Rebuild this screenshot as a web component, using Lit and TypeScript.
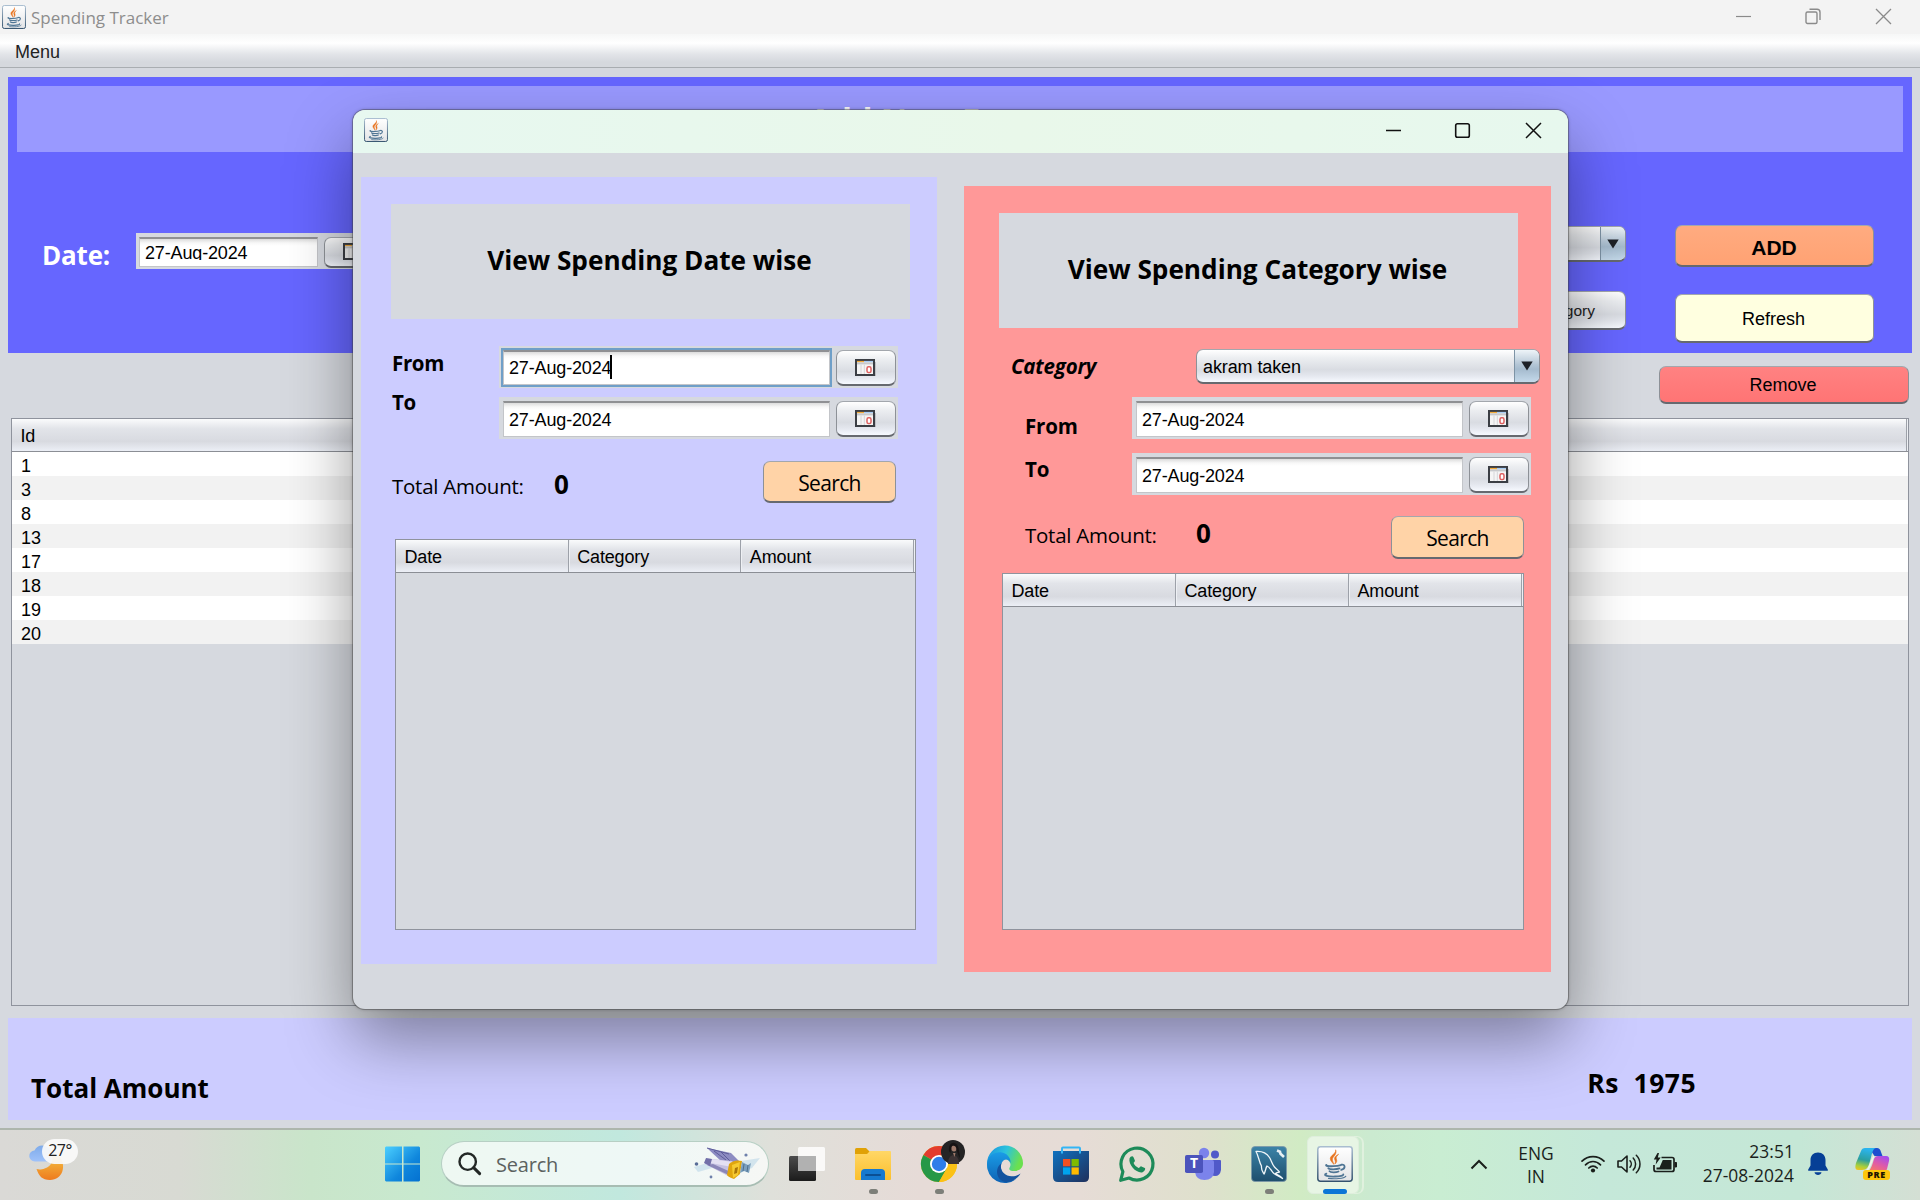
import { LitElement, html, css, svg } from "lit";
import { customElement, property } from "lit/decorators.js";

const javaIcon = (size: number) => html`<svg width=${size} height=${size} viewBox="0 0 36 36">
  <defs>
    <linearGradient id="jb" x1="0" y1="0" x2="0" y2="1"><stop offset="0" stop-color="#a9bdd0" /><stop offset="1" stop-color="#33526e" /></linearGradient>
    <linearGradient id="jf" x1="0" y1="0" x2="0" y2="1"><stop offset="0" stop-color="#ffffff" /><stop offset="1" stop-color="#e3e4e6" /></linearGradient>
  </defs>
  <rect x=".8" y=".8" width="34.4" height="34.4" rx="2.6" fill="url(#jf)" stroke="url(#jb)" stroke-width="1.5" />
  <path d="M18.6 3.8c1.4 3.4-5.6 5.6-5.3 9 .2 2.400 2.300 3.900 3.500 5.600-.5-2.500-1.600-3.500-1.400-5.300.3-2.600 5-4.600 3.200-9.300z" fill="#e8731f" stroke="#e8731f" stroke-width=".6" />
  <path d="M21.600 8.300c-3.200 1.500-4.500 3.200-3.900 5.100.5 1.500 1.200 2.600.1 4.600 2.300-1.900 2.200-3.300 1.500-5-.6-1.700.4-3 2.300-4.700z" fill="#e8731f" stroke="#e8731f" stroke-width=".6" />
  <g fill="none" stroke="#4f7594" stroke-linecap="round" stroke-width="1.800">
    <path d="M9.500 18.900c-1.800 1 2.500 1.500 6.800 1.300 3-.1 6-.6 7.500-1.100" />
    <path d="M24.500 18.700c3.700-.8 4.600 3.800-.3 5.200" />
    <path d="M11.300 22.200c1 1.500 8.500 1.300 11.200.2M12.500 25.300c1 1.400 6.800 1.300 9 .2" />
    <path d="M9.400 27.700c-4.500 1.700 2.600 3 8.600 2.800 5-.1 8.700-1 8.300-2.100" />
    <path d="M11.500 32.400c6.500.8 15.500.2 17.200-2.100" stroke-width="1.200" />
  </g>
</svg>`;

const calendarIcon = html`<svg width="21" height="18" viewBox="0 0 21 18">
  <path d="M3 16.200h18V3" fill="none" stroke="#b9babd" stroke-width="1.600" />
  <rect x="1" y="1" width="18" height="15" fill="#f5f5f5" stroke="#3b3e44" stroke-width="2" />
  <path d="M2 2.600h7" stroke="#f2ab3c" stroke-width="1.400" /><path d="M9 2.600h9" stroke="#a9cdf3" stroke-width="1.400" />
  <path d="M2 4.400h16" stroke="#c7c9cc" stroke-width="2" />
  <path d="M6 5.500v9.500M9.300 5.500v9.500" stroke="#d5d6d9" stroke-width="1" />
  <rect x="12" y="7.800" width="4" height="5.800" rx="1.600" fill="#fff" stroke="#dd5f5f" stroke-width="1.500" />
</svg>`;

const arrow = html`<svg width="12" height="10" viewBox="0 0 12 10"><path d="M.3.500h11.400L6 9.600z" fill="#1d2127" /></svg>`;

const nimbus = css`
  .btn {
    box-sizing: border-box;
    display: flex;
    align-items: center;
    justify-content: center;
    border: 1.500px solid #8d9197;
    border-top-color: #a3a7ad;
    border-bottom: 2px solid #66696f;
    border-radius: 7px;
    background: linear-gradient(#ffffff 0, #eceef1 25%, #d9dce2 62%, #e4e7ee 80%, #f6f9ff 100%);
    color: #000;
    font: 18px "Liberation Sans", Arial, sans-serif;
    white-space: nowrap;
  }
  svg { display: block; flex: none; }
`;

@customElement("date-picker")
export class DatePicker extends LitElement {
  @property() value = "27-Aug-2024";
  @property({ type: Boolean, reflect: true }) focused = false;
  @property({ type: Boolean, reflect: true }) compact = false;

  static styles = [nimbus, css`
    :host { box-sizing: border-box; display: flex; width: 399px; height: 42px; padding: 4px 2px 2px 4px; background: #d6d9df; }
    .field {
      box-sizing: border-box;
      width: 327px;
      height: 36px;
      padding-left: 5px;
      border: 1px solid #c3c5c9;
      border-top: 2px solid #8f9093;
      background: linear-gradient(#dcdcdc 0, #f8f8f8 4px, #fff 7px);
      font: 18px/34px "Liberation Sans", Arial, sans-serif;
      letter-spacing: -.150px;
      color: #000;
      white-space: nowrap;
      overflow: hidden;
    }
    :host([focused]) .field { outline: 2px solid #6f9fc8; outline-offset: 0; height: 35px; border-top-width: 2px; }
    .caret { display: inline-block; width: 2px; height: 24px; margin-left: -1px; vertical-align: -5px; background: #000; }
    :host([focused]) .field { line-height: 33px; }
    .btn { width: 60px; height: 36px; margin-left: 6px; padding-right: 2px; }
    :host([compact]) { width: 250px; height: 36px; padding-left: 3px; }
    :host([compact]) .field { width: 179px; height: 30px; line-height: 36px; }
    :host([compact]) .text { display: block; height: 22px; line-height: 30px; margin-top: -1px; overflow: hidden; }
    :host([compact]) .btn { height: 31px; }
  `];

  render() {
    return html`
      <div class="field"><span class="text">${this.value}${this.focused ? html`<span class="caret"></span>` : ""}</span></div>
      <div class="btn">${calendarIcon}</div>`;
  }
}

@customElement("result-table")
export class ResultTable extends LitElement {
  @property({ attribute: false }) columns: string[] = ["Date", "Category", "Amount"];
  @property({ attribute: false }) rows: string[] = [];

  static styles = css`
    :host { box-sizing: border-box; display: block; border: 1.500px solid #8f939d; background: #d6d9df; font: 18px "Liberation Sans", Arial, sans-serif; color: #000; }
    .head { box-sizing: border-box; display: flex; height: 33px; padding-right: 1px; border-bottom: 1.500px solid #8b8e95;
      background: linear-gradient(#fafbfc 0, #e2e4e9 30%, #d8dae0 70%, #eceff6 100%); }
    .col { flex: 1; box-sizing: border-box; padding-left: 8.500px; line-height: 35px; border-right: 1px solid #9da1a9; box-shadow: 1px 0 #eef0f4; letter-spacing: -.150px; }
    .row { height: 24px; padding-left: 9px; line-height: 28px; background: #fff; }
    .row:nth-child(odd) { background: #f2f2f2; }
  `;

  render() {
    return html`
      <div class="head">${this.columns.map((c) => html`<div class="col">${c}</div>`)}</div>
      ${this.rows.map((r) => html`<div class="row">${r}</div>`)}`;
  }
}

@customElement("spending-dialog")
export class SpendingDialog extends LitElement {
  static styles = [nimbus, css`
    :host {
      display: block;
      overflow: hidden;
      border-radius: 12px;
      background: #d6d9df;
      box-shadow: 0 0 0 1px rgba(70, 70, 70, .42), 0 0 3px 1px rgba(0, 0, 0, .18), 0 30px 66px rgba(0, 0, 0, .4);
      font-family: "Open Sans", "Noto Sans", sans-serif;
      color: #000;
    }
    .bar { display: flex; height: 43px; background: linear-gradient(90deg, #e7f8f0, #e9f8ea 55%, #e7f8ee); }
    .app { padding: 8px 0 0 11px; }
    .controls { display: flex; margin-left: auto; padding: 12px 26px 0 0; }
    .controls svg + svg { margin-left: 52px; }
    .controls svg:last-child { margin-left: 54px; }
    .panels { display: flex; align-items: flex-start; }
    .panel { box-sizing: border-box; padding-top: 27px; }
    .dates { width: 576px; height: 787px; margin: 24px 0 0 8px; background: #ccccff; }
    .cats { width: 587px; height: 786px; margin: 33px 0 0 27px; background: #ff9898; }
    .heading { width: 519px; height: 115px; margin-left: 30px; background: #d6d9df; text-align: center; font-size: 26.200px; font-weight: 700; line-height: 112px; }
    .heading span { position: relative; left: -1px; }
    .cats .heading { margin-left: 35px; }
    .form { display: flex; margin: 27px 0 0 31px; }
    .labels { width: 107px; font-size: 20.500px; font-weight: 700; letter-spacing: -.350px; }
    .from { line-height: 35px; }
    .to { line-height: 43px; }
    .pickers { display: flex; flex-direction: column; gap: 9px; }
    .row { display: flex; align-items: center; }
    .total { height: 42px; margin: 22px 41px 0 31px; }
    .cap { width: 162px; padding-top: 7px; font-size: 20.500px; letter-spacing: -.250px; white-space: nowrap; }
    .sum { padding-top: 4px; font-size: 26px; font-weight: 700; }
    .search { width: 133px; height: 42px; margin-left: auto; padding-top: 2px; background: #ffd3a7; font: 21px "Open Sans", "Noto Sans", sans-serif; letter-spacing: -.650px; }
    result-table { width: 521px; height: 391px; margin: 36px 0 0 34px; }
    .cat { height: 34px; margin: 21px 11px 0 47px; }
    .bold { font-size: 20.500px; font-weight: 700; letter-spacing: -.200px; white-space: nowrap; }
    .combo { display: flex; box-sizing: border-box; width: 344px; height: 35px; margin-left: auto; justify-content: flex-start; align-items: stretch; padding-left: 6px; line-height: 35px; letter-spacing: -.100px; overflow: hidden; }
    .drop { display: flex; align-items: center; justify-content: center; box-sizing: border-box; width: 25px; margin-left: auto; padding-right: 1px; border-left: 1.500px solid #7d93a5; background: linear-gradient(#eef4f8, #b4c6d6 45%, #a5bbce 60%, #c4d9ea); }
    .date { height: 42px; margin: 14px 20px 0 61px; }
    .date date-picker { margin-left: auto; }
    .low { padding-top: 16px; }
    .high { padding-bottom: 11px; }
    .total2 { height: 43px; margin: 21px 27px 0 61px; }
    .total2 .cap { width: 171px; padding: 0 0 5px; }
    .total2 .sum { padding: 0 0 9px; }
    .total2 .search { height: 43px; }
    .cats result-table { width: 522px; height: 357px; margin: 14px 0 0 38px; }
  `];

  render() {
    return html`
      <div class="bar">
        <div class="app">${javaIcon(24)}</div>
        <div class="controls">
          <svg width="17" height="17" viewBox="0 0 17 17"><path d="M1 8.500h15" stroke="#111" stroke-width="1.400" /></svg>
          <svg width="17" height="17" viewBox="0 0 17 17"><rect x="1.700" y="1.700" width="13.600" height="13.600" rx="1.800" fill="none" stroke="#111" stroke-width="1.600" /></svg>
          <svg width="17" height="17" viewBox="0 0 17 17"><path d="M1 1l15 15M16 1L1 16" stroke="#111" stroke-width="1.500" /></svg>
        </div>
      </div>
      <div class="panels">
        <section class="panel dates">
          <div class="heading"><span>View Spending Date wise</span></div>
          <div class="form">
            <div class="labels"><div class="from">From</div><div class="to">To</div></div>
            <div class="pickers"><date-picker focused></date-picker><date-picker></date-picker></div>
          </div>
          <div class="row total"><span class="cap">Total Amount:</span><span class="sum">0</span><div class="btn search">Search</div></div>
          <result-table></result-table>
        </section>
        <section class="panel cats">
          <div class="heading"><span>View Spending Category wise</span></div>
          <div class="row cat"><em class="bold">Category</em><div class="btn combo">akram taken<span class="drop">${arrow}</span></div></div>
          <div class="row date"><span class="bold low">From</span><date-picker></date-picker></div>
          <div class="row date"><span class="bold high">To</span><date-picker></date-picker></div>
          <div class="row total2"><span class="cap">Total Amount:</span><span class="sum">0</span><div class="btn search">Search</div></div>
          <result-table></result-table>
        </section>
      </div>`;
  }
}

const start = svg`<defs><linearGradient id="w" gradientUnits="userSpaceOnUse" x1="0" y1="0" x2="36" y2="36"><stop offset="0" stop-color="#4cd0ff"/><stop offset=".6" stop-color="#0f86dc"/><stop offset="1" stop-color="#0370d0"/></linearGradient></defs>
  <path fill="url(#w)" d="M1 .500h16v17H0V1.500zM18.500.500H34l1 1v16H18.500zM0 18.500h17v17H1l-1-1zM18.500 18.500H35v16l-1 1H18.500z"/>`;

const taskView = svg`<defs><linearGradient id="tv1" x1="0" y1="0" x2="0" y2="1"><stop offset="0" stop-color="#4c4c4c"/><stop offset="1" stop-color="#1b1b1b"/></linearGradient></defs>
  <rect x="0" y="10" width="27" height="25" rx="1.500" fill="url(#tv1)"/><rect x="9" y="1" width="27" height="24" rx="1.500" fill="#fff" opacity=".82"/><path d="M9 10h18v15H9z" fill="#a9a9a9" opacity=".85"/>`;

const explorer = svg`<defs><linearGradient id="fo" x1="0" y1="0" x2="0" y2="1"><stop offset="0" stop-color="#ffd766"/><stop offset="1" stop-color="#fbbf2d"/></linearGradient></defs>
  <path d="M0 3.500Q0 2 1.500 2H11l4 4-3 4H0z" fill="#e0a106"/><path d="M0 8h12l3-3h20q1 0 1 1v27q0 1-1 1H1q-1 0-1-1z" fill="url(#fo)"/>
  <path d="M6 34v-7q0-4 4-4h16q4 0 4 4v7z" fill="#1579cf"/><path d="M11 29h14" stroke="#0b4f93" stroke-width="2" stroke-linecap="round"/>`;

const chrome = svg`<circle cx="18" cy="18" r="18" fill="#fbc116"/><path d="M18 18L2.400 9A18 18 0 0 1 33.600 9z" fill="#e33b2e"/>
  <path d="M2.400 9A18 18 0 0 0 18 36l7.800-13.500L18 18z" fill="#269847"/><path d="M18 9.500h15.900A18 18 0 0 1 18 36l8-14z" fill="#fbc116"/>
  <circle cx="18" cy="18" r="9" fill="#fff"/><circle cx="18" cy="18" r="7.200" fill="#2f7de9"/>`;

const edge = svg`<defs>
    <linearGradient id="e1" x1="0" y1="0" x2="1" y2=".3"><stop offset="0" stop-color="#1a8fe0"/><stop offset=".55" stop-color="#2cc3dc"/><stop offset="1" stop-color="#6be04f"/></linearGradient>
    <linearGradient id="e2" x1="0" y1="0" x2="0" y2="1"><stop offset="0" stop-color="#1a9ce6"/><stop offset="1" stop-color="#0e62b4"/></linearGradient></defs>
  <path d="M0 18A18 18 0 0 1 36 17c.2 5.500-4 8-8.500 8-5 0-6-2-4.800-3.600 2-2.800.3-8.400-6.700-8.600C8 12.500 2 17 .400 23z" fill="url(#e1)"/>
  <path d="M0 18C1 9 8 5.500 15 6.500 22 8 24 14 23.500 17c-1-3.500-4.500-4.500-7-2.500-4 3.300-3.500 12 2.500 16.500 3 2.300 7 3.500 10 2.300A18 18 0 0 1 0 18z" fill="url(#e2)"/>
  <path d="M14.500 17c-2.500 7 3 13 10 13.200 4 .2 7-1.200 9-2.700C31 32.500 25 36 18.500 36 10 35 6.500 23 14.500 17z" fill="#12529f"/>`;

const store = svg`<defs><linearGradient id="st" x1="0" y1="0" x2="1" y2="1"><stop offset="0" stop-color="#0f71bf"/><stop offset="1" stop-color="#20305c"/></linearGradient></defs>
  <path d="M9 7V2.500Q9 1.500 10 1.500h16q1 0 1 1V7" fill="none" stroke="#34b5f5" stroke-width="2"/>
  <path d="M0 5h36v26q0 5-5 5H5q-5 0-5-5z" fill="url(#st)"/><path d="M9 5v2.500M27 5v2.500" stroke="#34b5f5" stroke-width="2"/>
  <path d="M10 13h7.300v7.300H10z" fill="#f25022"/><path d="M18.500 13h7.300v7.300h-7.300z" fill="#7fba00"/><path d="M10 21.400h7.300v7.200H10z" fill="#00a4ef"/><path d="M18.500 21.400h7.300v7.200h-7.300z" fill="#ffb900"/>`;

const whatsapp = svg`<path d="M1.700 34.300l2.200-8.600a16 16 0 1 1 6.200 6.300z" fill="none" stroke="#1d8b59" stroke-width="3.200" stroke-linejoin="round"/>
  <path d="M10.500 12.500c1-2.500 3.300-3 4-1.300l1.400 3.300c.3.900-1.300 2-1.300 2.600.6 1.900 3 4.200 5 4.900.8.200 1.900-2 2.800-1.600l3.400 1.700c1 .6-.2 3.400-2.200 4.100-5.500 1.700-14.500-7-13.100-13.700z" fill="#1d8b59"/>`;

const teams = svg`<circle cx="30" cy="8.500" r="4" fill="#5059c9"/><path d="M24 14h11q1 0 1 1v9q-1 6-6 6-4 0-6-3z" fill="#5059c9"/>
  <circle cx="19" cy="7" r="5.200" fill="#7b83eb"/><path d="M10 14h17q2 0 2 2v10q-1 8-9.500 8T10 26z" fill="#7b83eb"/>
  <rect x="0" y="9" width="18" height="18" rx="1.800" fill="#4b53bc"/>`;

const workbench = svg`<defs><linearGradient id="wb" x1="0" y1="0" x2="0" y2="1"><stop offset="0" stop-color="#3c84a8"/><stop offset="1" stop-color="#1e4e6d"/></linearGradient></defs>
  <rect x=".500" y=".500" width="35" height="35" rx="3.500" fill="url(#wb)" stroke="#7b97a8" stroke-width=".800"/>
  <path d="M5 5.500c6-.5 10.500 1.500 13.500 6 2 3 2.500 6.500 5 9.500 1.700 2 4 3 5 5-2 .3-3 .5-4 1.500 2 1 5 2.500 7 5-3-2-6-3-8.500-5-2.500-2.200-4-6.500-7-7.500-1.500 2-1.500 6-3 8-1.500-2.500-3-4-2.500-8C8 16 7.500 9.500 5 5.500z" fill="none" stroke="#f0f6f9" stroke-width="1.300" stroke-linejoin="round"/>
  <path d="M26 4.500l3 1.200.5 2 3.500 3.300" stroke="#e7eff4" stroke-width="2.600" fill="none"/>`;

const cup = svg`<g>${javaIcon(36)}</g>`;

@customElement("task-bar")
export class TaskBar extends LitElement {
  static styles = css`
    :host {
      box-sizing: border-box;
      display: flex;
      width: 1920px;
      height: 72px;
      border-top: 2px solid #adb6ac;
      background: linear-gradient(90deg, #dad9d6 0, #d8dad3 180px, #c9e5ca 310px, #c8e9cf 420px, #c1e8de 620px, #dfe0da 770px, #e6dbd7 920px, #e6dcd6 1080px, #dfe0cd 1200px, #d1ebc4 1300px, #cbead0 1370px, #c9edd2 1440px, #c5e8d9 1600px, #c5e7d6 1800px, #d4dfd4 1920px);
      font: 17.400px "Open Sans", "Noto Sans", sans-serif;
      color: #1a1f1b;
    }
    svg { display: block; flex: none; overflow: visible; }
    .weather { position: relative; width: 370px; }
    .weather svg { margin: 14px 0 0 28px; }
    .temp { position: absolute; left: 42px; top: 9px; width: 36px; height: 25px; border-radius: 13px; background: rgba(250, 250, 250, .93); font-size: 16px; line-height: 23px; text-align: center; letter-spacing: -.500px; color: #222; }
    .cell { position: relative; display: flex; align-items: center; justify-content: center; width: 66px; height: 70px; margin-top: -1px; }
    .dot { position: absolute; left: 29px; top: 60px; width: 9px; height: 5px; border-radius: 3px; background: #7d7f79; }
    .active::before { content: ""; position: absolute; left: 5px; top: 7px; width: 50px; height: 56px; border: 1px solid #dfeedd; border-radius: 6px; background: #e7f5e4; }
    .active::after { content: ""; position: absolute; left: 52px; top: 7px; width: 8px; height: 56px; border: solid #e0f1de; border-width: 1px 2px 1px 0; border-radius: 0 7px 7px 0; }
    .active svg { position: relative; }
    .active .dot { left: 21px; width: 24px; background: #0b76d6; }
    .face { position: absolute; left: 35px; top: 11px; width: 24px; height: 24px; }
    .letter { position: absolute; left: 15px; top: 25px; width: 18px; font-size: 14px; line-height: 18px; font-weight: 700; text-align: center; color: #fff; }
    .search { box-sizing: border-box; display: flex; align-items: center; width: 328px; height: 46px; margin: 11px 5px 0; padding: 0 6px 0 16px; border: 1.500px solid #b7cfc4; border-bottom: 2px solid #a7bdb3; border-radius: 23px; background: linear-gradient(90deg, #eef8f2, #eef8f6 60%, #f6f7f5); }
    .search span { margin: 1px 0 0 15px; font-size: 20px; letter-spacing: -.200px; color: #5c625f; }
    .ship { margin-left: auto; }
    .tray { display: flex; align-items: center; height: 72px; margin: -2px 30px 0 auto; }
    .chev { width: 42px; display: flex; justify-content: center; }
    .lang { width: 72px; margin-right: 3px; padding-top: 2px; line-height: 23px; text-align: center; }
    .ic { width: 36px; display: flex; justify-content: center; }
    .clock { width: 111px; margin-right: 14px; padding-bottom: 2px; line-height: 24px; letter-spacing: .060px; text-align: right; white-space: nowrap; }
    .copilot { position: relative; width: 35px; height: 36px; margin-left: 27px; }
    .pre { position: absolute; left: 8px; top: 24px; width: 27px; height: 10px; border-radius: 3px; background: #fdc60c; font-size: 9px; font-weight: 800; line-height: 10px; letter-spacing: .600px; text-align: center; color: #1c1600; }
  `;

  private cell(icon: unknown, extra: unknown = "", cls = "") {
    return html`<div class="cell ${cls}"><svg width="36" height="36" viewBox="0 0 36 36">${icon}</svg>${extra}</div>`;
  }

  render() {
    const dot = html`<i class="dot"></i>`;
    return html`
      <div class="weather">
        <svg width="44" height="38" viewBox="0 0 44 38">
          <defs><linearGradient id="mo" x1="0" y1="0" x2="0" y2="1"><stop offset="0" stop-color="#f4c041" /><stop offset="1" stop-color="#ee7a1e" /></linearGradient>
          <linearGradient id="cl" x1="0" y1="0" x2="0" y2="1"><stop offset="0" stop-color="#7eabea" /><stop offset="1" stop-color="#9fc2fa" /></linearGradient></defs>
          <path d="M7 17.500a5.500 5.500 0 0 1-.5-11 9 9 0 0 1 9-4.800 9 9 0 0 1 7 4.800v11z" fill="url(#cl)" />
          <path d="M31 12c8 9 4 24-9 24-8 0-11-4-13.500-11C15 27 27 22 24 12z" fill="url(#mo)" />
        </svg>
        <div class="temp">27°</div>
      </div>
      ${this.cell(start)}
      <div class="search">
        <svg width="23" height="23" viewBox="0 0 23 23"><circle cx="9.700" cy="9.700" r="8.200" fill="none" stroke="#222725" stroke-width="2.400" /><path d="M15.600 15.600l6 6" stroke="#222725" stroke-width="3" stroke-linecap="round" /></svg>
        <span>Search</span>
        <svg class="ship" width="68" height="34" viewBox="0 0 68 34">
          <path d="M0 20l16-5 2 6-14 4zM47 14l19-3-8 10-10 4z" fill="#a9cbe4" opacity=".45" />
          <path d="M13 1l24 5 10 10-18 0z" fill="#8d8cc2" /><path d="M13 1l22 6M20 4l12 9M27 5l10 10" stroke="#5d5c99" stroke-width="1" fill="none" />
          <path d="M12 11.500l26 2.500 6 6-6 11-27-14z" fill="#c6c1e2" /><path d="M11 15l2-3.500 26 3.500-1 5z" fill="#e4e0f3" /><path d="M13 18l24 11 2-3-20-9z" fill="#8b86b9" /><path d="M12 11l6 1-2 7-6-3z" fill="#716fa8" />
          <path d="M35 17q5-5 13-3l-2 13-6 5q-6-2-7-4z" fill="#e0a50d" /><path d="M38 18l8-3-2 13-5 3z" fill="#f6cb31" /><path d="M41 21l3-1-1 6-3 1z" fill="#a97508" />
          <path d="M48 15l6 3 3-2-2 10-5-2-4 2z" fill="#7ba0bf" /><path d="M50 17l-1 7M54 18l-1 7" stroke="#4e708e" />
          <circle cx="2.500" cy="17" r="1.800" fill="#596d98" /><circle cx="52" cy="8" r="1.600" fill="#6e80ab" /><circle cx="17" cy="30" r="1.400" fill="#6e80ab" />
        </svg>
      </div>
      ${this.cell(taskView)}
      ${this.cell(explorer, dot)}
      ${this.cell(chrome, html`<svg class="face" viewBox="0 0 24 24"><circle cx="12" cy="12" r="12" fill="#252425" /><ellipse cx="13" cy="7.500" rx="2.800" ry="3.900" fill="#a07a6b" /><path d="M8 11c-1-10 8-11 9.500-3 .5 4 2 8 1 10l-3-8c0-5-4-5-5-3l-1 6z" fill="#171314" /><path d="M7 24c0-6 2-8 5-9 4 0 6 4 6 9z" fill="#3d3334" /><path d="M12 13l2.500 0-1 4z" fill="#a07a6b" /></svg>${dot}`)}
      ${this.cell(edge)}
      ${this.cell(store)}
      ${this.cell(whatsapp)}
      ${this.cell(teams, html`<span class="letter">T</span>`)}
      ${this.cell(workbench, dot)}
      ${this.cell(cup, dot, "active")}
      <div class="tray">
        <div class="chev"><svg width="18" height="11" viewBox="0 0 18 11"><path d="M1.500 9.500L9 2l7.500 7.500" fill="none" stroke="#1a1f1b" stroke-width="2" /></svg></div>
        <div class="lang">ENG<br />IN</div>
        <div class="ic"><svg width="24" height="20" viewBox="0 0 24 20"><g fill="none" stroke="#1a1f1b" stroke-width="1.700" stroke-linecap="round"><path d="M1 7.200C7 1 17 1 23 7.200" /><path d="M4.500 10.800c4.300-4.400 10.700-4.400 15 0" /><path d="M7.800 14c2.400-2.500 6-2.500 8.400 0" /></g><circle cx="12" cy="16.500" r="2.100" fill="#1a1f1b" /></svg></div>
        <div class="ic"><svg width="24" height="20" viewBox="0 0 24 20"><path d="M1 7h3.500L10 2v16l-5.500-5H1z" fill="none" stroke="#1a1f1b" stroke-width="1.600" stroke-linejoin="round" /><path d="M13 6.800c1.700 1.800 1.700 4.600 0 6.400M16.200 4c3.200 3.300 3.200 8.700 0 12M19.300 1.200c4.900 5 4.900 12.600 0 17.600" fill="none" stroke="#1a1f1b" stroke-width="1.500" stroke-linecap="round" /></svg></div>
        <div class="ic"><svg width="24" height="22" viewBox="0 0 24 22"><path d="M8.500 4.500H19q2 0 2 2v10q0 2-2 2H3q-2 0-2-2V12" fill="none" stroke="#1a1f1b" stroke-width="1.700" /><path d="M22 9.500h1.500v4.500H22z" stroke="#1a1f1b" fill="#1a1f1b" /><path d="M9.800 7H18.500v9.500H3.500V14.500h3z" fill="#1a1f1b" /><path d="M4.500 0L.800 6.500h2.700L2.700 11.500l5-7H4.800L6 0z" fill="#1a1f1b" /></svg></div>
        <div class="clock">23:51<br />27-08-2024</div>
        <svg width="20" height="24" viewBox="0 0 20 24"><path d="M10 .500c4.500 0 7.500 3 7.500 7.500v5.500l2.300 4v1.300H.200v-1.300l2.300-4V8C2.500 3.500 5.500.500 10 .500z" fill="#063f96" /><path d="M6.500 20.300h7c-.6 3.500-6.400 3.500-7 0z" fill="#063f96" /></svg>
        <div class="copilot">
          <svg width="35" height="30" viewBox="0 0 35 30">
            <defs>
              <linearGradient id="c1" x1=".3" y1="0" x2=".1" y2="1"><stop offset="0" stop-color="#2bb4ee" /><stop offset=".5" stop-color="#2b9fa0" /><stop offset=".8" stop-color="#a8cf3a" /><stop offset="1" stop-color="#f2c51f" /></linearGradient>
              <linearGradient id="c2" x1=".8" y1="0" x2=".2" y2="1"><stop offset="0" stop-color="#a34df0" /><stop offset=".5" stop-color="#e05ba6" /><stop offset="1" stop-color="#fb7d5b" /></linearGradient></defs>
            <path d="M14 2h8q3 0 4 4l1.500 4h-8z" fill="#1e4fd0" />
            <path d="M10 2h11c-4 1-4 7-6 13-1.500 6-3 9-8 9H3c-3 0-3-3-2-7L6 5q1-3 4-3z" fill="url(#c1)" />
            <path d="M23 10h8q4 0 3 5l-2 8q-1 3-4 3h-16c4-1 6-10 7-13q1-3 4-3z" fill="url(#c2)" />
            <path d="M19 10.500c-2 1-4 13-8 14.500" fill="none" stroke="#eef5ea" stroke-width="1.800" />
          </svg>
          <span class="pre">PRE</span>
        </div>
      </div>`;
  }
}

@customElement("app-root")
export class AppRoot extends LitElement {
  static styles = [nimbus, css`
    :host { position: relative; display: block; width: 1920px; height: 1200px; overflow: hidden; background: #d6d9df; font-family: "Open Sans", "Noto Sans", sans-serif; color: #000; }
    .window { display: flex; flex-direction: column; height: 1128px; }
    .title { display: flex; align-items: center; box-sizing: border-box; height: 34px; padding: 0 28px 1px 2px; background: #f3f3f3; font-size: 17px; color: #8d8d8d; }
    .title span { margin: 1px auto 0 5px; }
    .title svg.c { margin-left: 53px; }
    .menu { box-sizing: border-box; height: 34px; padding-left: 15px; border-bottom: 1px solid #a9adb1; background: linear-gradient(#f6f7f7 0, #fff 28%, #e3e5e9 60%, #d5d8dd 85%); font: 18px/37px "Liberation Sans", Arial, sans-serif; color: #222; }
    .entry { box-sizing: border-box; height: 276px; margin: 9px 8px 0; padding: 9px; background: #6666ff; }
    .banner { height: 66px; background: #9999ff; color: #fff; font-size: 32.300px; font-weight: 700; line-height: 66px; text-align: center; }
    .fields { display: flex; align-items: flex-start; }
    .when { display: flex; align-items: center; margin: 81px 0 0 25px; }
    .when b { width: 94px; padding-top: 9px; font-size: 26px; line-height: 27px; letter-spacing: -.200px; color: #fff; }
    .pick { width: 300px; margin: 74px 49px 0 auto; }
    .combo { height: 36px; justify-content: flex-end; padding: 0; overflow: hidden; }
    .drop { display: flex; align-items: center; justify-content: center; width: 24px; height: 100%; border-left: 1.500px solid #7d93a5; background: linear-gradient(#eef4f8, #b4c6d6 45%, #a5bbce 60%, #c4d9ea); }
    .newcat { height: 39px; margin-top: 29px; justify-content: flex-end; padding: 1px 30px 0 0; font-size: 15.500px; color: #222; }
    .actions { width: 199px; margin: 73px 29px 0 0; }
    .add { height: 42px; background: linear-gradient(#ffab80, #ffa273); font-size: 21px; font-weight: 700; padding: 4px 1px 0 0; }
    .refresh { height: 49px; margin-top: 27px; padding: 2px 2px 0 0; background: #ffffe0; }
    .remove { width: 250px; height: 38px; margin: 13px 11px 0 auto; padding: 2px 2px 0 0; background: linear-gradient(#ff8282, #ff7474); }
    .list { width: 1898px; height: 588px; margin: 14px 0 0 11px; }
    .sums { display: flex; justify-content: space-between; box-sizing: border-box; height: 102px; margin: 12px 8px 0; padding: 0 216px 0 23px; background: #ccccff; font-size: 26px; font-weight: 700; line-height: 36px; }
    .left { padding-top: 52px; }
    .right { padding-top: 47px; font-size: 26.500px; letter-spacing: .450px; white-space: pre; }
    spending-dialog { position: absolute; left: 353px; top: 110px; width: 1215px; height: 899px; }
    task-bar { position: relative; }
  `];

  render() {
    return html`
      <main class="window">
        <header class="title">
          ${javaIcon(24)}<span>Spending Tracker</span>
          <svg class="c" width="17" height="17" viewBox="0 0 17 17"><path d="M1 8.500h15" stroke="#8a8a8a" stroke-width="1.200" /></svg>
          <svg class="c" width="17" height="17" viewBox="0 0 17 17"><rect x="1" y="4" width="11" height="11.500" rx="1.500" fill="none" stroke="#8a8a8a" stroke-width="1.400" /><path d="M4.500 1.300H12q3 0 3 3V12" fill="none" stroke="#8a8a8a" stroke-width="1.400" /></svg>
          <svg class="c" width="17" height="17" viewBox="0 0 17 17"><path d="M1 1l15 15M16 1L1 16" stroke="#8a8a8a" stroke-width="1.300" /></svg>
        </header>
        <nav class="menu">Menu</nav>
        <section class="entry">
          <div class="banner">Add New Expenses</div>
          <div class="fields">
            <div class="when"><b>Date:</b><date-picker compact></date-picker></div>
            <div class="pick">
              <div class="btn combo"><span class="drop">${arrow}</span></div>
              <div class="btn newcat">Add Category</div>
            </div>
            <div class="actions"><div class="btn add">ADD</div><div class="btn refresh">Refresh</div></div>
          </div>
        </section>
        <div class="btn remove">Remove</div>
        <result-table class="list" .columns=${["Id"]} .rows=${["1", "3", "8", "13", "17", "18", "19", "20"]}></result-table>
        <footer class="sums"><span class="left">Total Amount</span><span class="right">Rs  1975</span></footer>
      </main>
      <spending-dialog></spending-dialog>
      <task-bar></task-bar>`;
  }
}
